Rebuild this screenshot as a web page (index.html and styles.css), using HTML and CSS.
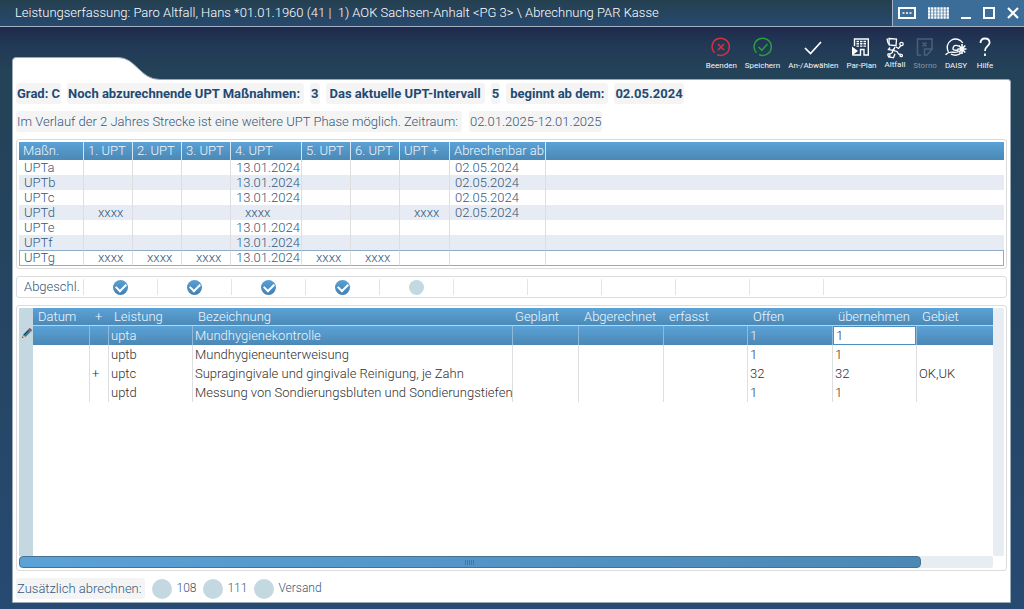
FILE: index.html
```html
<!DOCTYPE html>
<html lang="de">
<head>
<meta charset="utf-8">
<title>Abrechnung PAR Kasse</title>
<link rel="stylesheet" href="styles.css">
</head>
<body>
<header class="titlebar">
  <h1 class="title">Leistungserfassung: Paro Altfall, Hans *01.01.1960 (41 |&nbsp; 1) AOK Sachsen-Anhalt &lt;PG 3&gt; \ Abrechnung PAR Kasse</h1>
  <div class="window-controls">
    <button type="button" aria-label="Kennwort"><svg width="18" height="12" viewBox="0 0 18 12"><rect x="1" y="1" width="16" height="10" fill="none" stroke="#fff" stroke-width="2"/><path d="M4.500 6h2M8 6h2M11.500 6h2" stroke="#fff" stroke-width="1.500"/></svg></button>
    <button type="button" aria-label="Tastatur"><svg width="21" height="12" viewBox="0 0 21 12"><path d="M0 1.500h21M0 4.500h21M0 7.500h21M0 10.500h21" stroke="#fff" stroke-width="2.400" stroke-dasharray="2.300 .8"/></svg></button>
    <button type="button" aria-label="Minimieren"><svg width="10" height="12" viewBox="0 0 10 12"><path d="M0 11h10" stroke="#fff" stroke-width="2"/></svg></button>
    <button type="button" aria-label="Maximieren"><svg width="12" height="12" viewBox="0 0 12 12"><rect x="1" y="1" width="10" height="10" fill="none" stroke="#fff" stroke-width="2"/></svg></button>
    <button type="button" aria-label="Schließen"><svg width="12" height="12" viewBox="0 0 12 12"><path d="M1 1l10 10M11 1L1 11" stroke="#fff" stroke-width="2.200"/></svg></button>
  </div>
</header>

<main class="workspace">
  <div class="top">
    <svg class="tab" width="148" height="23" viewBox="0 0 148 23"><path d="M.5 23V4Q.5.500 4 .5H106C124 .5 128 22.500 147 22.500V23Z" fill="#fff"/><path d="M.5 23V4Q.5.500 4 .5H106C124 .5 128 22.500 148 22.500" fill="none" stroke="#9aa9b8"/></svg>
    <nav class="toolbar">
      <button type="button"><svg width="20" height="20" viewBox="0 0 20 20" fill="none" stroke="#d9313a" stroke-width="1.500"><path d="M3.500 15.800A8.600 8.600 0 1 1 6 17.600M7 7l6 6M13 7l-6 6"/></svg>Beenden</button>
      <button type="button"><svg width="20" height="20" viewBox="0 0 20 20" fill="none" stroke="#28a03c" stroke-width="1.500"><path d="M3.500 15.800A8.600 8.600 0 1 1 6 17.600M5.500 10l3.300 3.300L14.500 7"/></svg>Speichern</button>
      <button type="button"><svg width="20" height="20" viewBox="0 0 20 20" fill="none" stroke="#fff" stroke-width="1.700"><path d="M2 11l5.500 5.500L18 5"/></svg>An-/Abwählen</button>
      <button type="button"><svg width="20" height="20" viewBox="0 0 20 20" fill="none" stroke="#fff" stroke-width="1.400"><path d="M3.500 9V2H17.300V18H13V12.500H9.500V18H1.500"/><path d="M5.500 4.500h10M5.500 6.800h10M5.500 9.100h10" stroke-dasharray="2.500 1"/><path d="M1 9.500l6 4.500-6 4.500z" fill="#fff" stroke="none"/></svg>Par-Plan</button>
      <button type="button" class="raised"><svg width="20" height="22" viewBox="0 0 20 22" fill="none" stroke="#fff" stroke-width="1.300"><path d="M4 1.500L11.500 2.200 11 8.700 4.200 8Z"/><path d="M2 1.500l1 4.500 1.500 1.500M5 10.500l-1.500 2 4 .8 2.500-3M7.500 13v2.500L5 17l-2.500 0M2.500 17.500l1.500 3M11 10l2.500 1.500 2.500-3M10 10l-1.500 3.500 3.500 1 1.500 2.500 2.500.5M5 18l-.5 2 4 .8 1.500-4"/><circle cx="16.500" cy="7" r="1.700"/><circle cx="16.200" cy="18.500" r="1.200"/></svg>Altfall</button>
      <button type="button" disabled><svg width="20" height="20" viewBox="0 0 20 20" fill="none" stroke="#4b6075" stroke-width="1.500"><path d="M6 18H2.500V2H17V12.500L12 18H9.500V12H17M7.500 5.500l4 4M11.500 5.500l-4 4"/></svg>Storno</button>
      <button type="button"><svg width="22" height="20" viewBox="0 0 22 20" fill="none" stroke="#fff" stroke-width="1.400"><path d="M17.800 6A8.200 8.200 0 1 0 3.500 14.800M6 17.200Q12 20 16.500 15.500"/><path d="M.5 17.800Q3.500 14.500 8 15.200T14 13.500M13.800 9.200Q9.500 7 8.200 10.500T13 13"/><path d="M17 7v10M12.500 12h9M13.800 8.500l6.400 7M20.200 8.500l-6.400 7" stroke-width="1.600"/></svg>DAISY</button>
      <button type="button"><svg width="20" height="20" viewBox="0 0 20 20" fill="none" stroke="#fff" stroke-width="1.800"><path d="M5.500 6Q5.500 1.500 10 1.500T14.600 5.800C14.600 9 10 9 10 14M10 16.500V19"/></svg>Hilfe</button>
    </nav>
  </div>

  <section class="panel">
    <div class="chips strong">
      <span class="chip">Grad: C</span><span class="chip wide">Noch abzurechnende UPT Maßnahmen:</span><span class="chip">3</span><span class="chip inset">Das aktuelle UPT-Intervall</span><span class="chip">5</span><span class="chip inset">beginnt ab dem:</span><span class="chip">02.05.2024</span>
    </div>
    <div class="chips">
      <span class="chip wide">Im Verlauf der 2 Jahres Strecke ist eine weitere UPT Phase möglich. Zeitraum:</span><span class="chip">02.01.2025-12.01.2025</span>
    </div>

    <div class="frame">
      <table class="measures">
        <colgroup><col class="w65"><col class="w49"><col class="w49"><col class="w49"><col class="w71"><col class="w49"><col class="w49"><col class="w50"><col class="w96"><col></colgroup>
        <thead><tr><th>Maßn.</th><th>1. UPT</th><th>2. UPT</th><th>3. UPT</th><th>4. UPT</th><th>5. UPT</th><th>6. UPT</th><th>UPT +</th><th>Abrechenbar ab</th><th></th></tr></thead>
        <tbody>
          <tr><td>UPTa</td><td></td><td></td><td></td><td>13.01.2024</td><td></td><td></td><td></td><td>02.05.2024</td><td></td></tr>
          <tr><td>UPTb</td><td></td><td></td><td></td><td>13.01.2024</td><td></td><td></td><td></td><td>02.05.2024</td><td></td></tr>
          <tr><td>UPTc</td><td></td><td></td><td></td><td>13.01.2024</td><td></td><td></td><td></td><td>02.05.2024</td><td></td></tr>
          <tr><td>UPTd</td><td class="x">xxxx</td><td></td><td></td><td class="x">xxxx</td><td></td><td></td><td class="x">xxxx</td><td>02.05.2024</td><td></td></tr>
          <tr><td>UPTe</td><td></td><td></td><td></td><td>13.01.2024</td><td></td><td></td><td></td><td></td><td></td></tr>
          <tr><td>UPTf</td><td></td><td></td><td></td><td>13.01.2024</td><td></td><td></td><td></td><td></td><td></td></tr>
          <tr class="current"><td>UPTg</td><td class="x">xxxx</td><td class="x">xxxx</td><td class="x">xxxx</td><td>13.01.2024</td><td class="x">xxxx</td><td class="x">xxxx</td><td></td><td></td><td></td></tr>
        </tbody>
      </table>
    </div>

    <div class="frame done">
      <span class="done-label">Abgeschl.</span>
      <span class="done-cell"><input type="checkbox" class="dot" aria-label="Abgeschlossen 1" checked></span>
      <span class="done-cell"><input type="checkbox" class="dot" aria-label="Abgeschlossen 2" checked></span>
      <span class="done-cell"><input type="checkbox" class="dot" aria-label="Abgeschlossen 3" checked></span>
      <span class="done-cell"><input type="checkbox" class="dot" aria-label="Abgeschlossen 4" checked></span>
      <span class="done-cell"><input type="checkbox" class="dot" aria-label="Abgeschlossen 5"></span>
      <span class="done-cell"></span><span class="done-cell"></span><span class="done-cell"></span><span class="done-cell"></span><span class="done-cell"></span>
    </div>

    <div class="frame services">
      <div class="gutter"><svg width="12" height="12" viewBox="0 0 12 12"><path d="M1 11l1-3.500L4.500 10z" fill="#d8b98c"/><path d="M2 7.500L7 2.500 9.500 5l-5 5z" fill="#2f7f9c"/><path d="M2.800 8.300l5-5" stroke="#123a50"/><path d="M7 2.500L8.800.8l2.500 2.500L9.500 5z" fill="#8a5a58"/><path d="M1 11l.4-1.400 1 1z" fill="#222"/></svg></div>
      <div class="grid">
        <table class="positions">
          <colgroup><col class="w57"><col class="w19"><col class="w84"><col class="w320"><col class="w66"><col class="w85"><col class="w84"><col class="w85"><col class="w84"><col></colgroup>
          <thead><tr><th>Datum</th><th>+</th><th>Leistung</th><th>Bezeichnung</th><th class="near">Geplant</th><th>Abgerechnet</th><th>erfasst</th><th>Offen</th><th>übernehmen</th><th>Gebiet</th></tr></thead>
          <tbody>
            <tr class="selected"><td></td><td></td><td>upta</td><td>Mundhygienekontrolle</td><td></td><td></td><td></td><td>1</td><td class="edit"><input type="text" value="1" aria-label="übernehmen"></td><td></td></tr>
            <tr><td></td><td></td><td>uptb</td><td>Mundhygieneunterweisung</td><td></td><td></td><td></td><td>1</td><td>1</td><td></td></tr>
            <tr><td></td><td>+</td><td>uptc</td><td>Supragingivale und gingivale Reinigung, je Zahn</td><td></td><td></td><td></td><td>32</td><td>32</td><td>OK,UK</td></tr>
            <tr><td></td><td></td><td>uptd</td><td>Messung von Sondierungsbluten und Sondierungstiefen</td><td></td><td></td><td></td><td>1</td><td>1</td><td></td></tr>
          </tbody>
        </table>
      </div>
      <div class="vscroll"></div>
      <div class="hscroll"><div class="thumb"></div></div>
    </div>

    <footer class="extras">
      <span class="chip wide">Zusätzlich abrechnen:</span>
      <label><input type="checkbox" class="dot big">108</label>
      <label><input type="checkbox" class="dot big">111</label>
      <label><input type="checkbox" class="dot big">Versand</label>
    </footer>
  </section>
</main>
</body>
</html>
```
FILE: styles.css
```css
* { box-sizing: border-box; }

body {
  margin: 0;
  min-height: 100vh;
  display: flex;
  flex-direction: column;
  font: 300 13px/15px Roboto, "Liberation Sans", sans-serif;
  color: #34587a;
  background: #244258;
}

button, input { font: inherit; color: inherit; margin: 0; }

button {
  padding: 0;
  border: 0;
  background: none;
}

.titlebar {
  display: flex;
  justify-content: space-between;
  height: 27px;
  border-bottom: 1px solid #a3b1c0;
  background: linear-gradient(#25404f, #27496f);
}

.title {
  margin: 0;
  padding-left: 15px;
  font: 300 13px/26px Roboto, "Liberation Sans", sans-serif;
  color: #fff;
}

.window-controls {
  display: flex;
  align-items: center;
  gap: 12px;
  padding: 0 5px;
  border-left: 1px solid #a3b1c0;
  background: #3c6d98;
}

.window-controls svg { display: block; }

.workspace {
  flex: 1;
  display: flex;
  flex-direction: column;
  padding: 0 13px 6px 12px;
  background: linear-gradient(#1f2a4c, #223a57 20px, #244258 45px, #244258 90px, #264a72);
}

.top {
  display: flex;
  justify-content: space-between;
  align-items: flex-end;
  height: 53px;
}

.tab { display: block; position: relative; }

.toolbar {
  display: flex;
  gap: 8px;
  align-self: flex-start;
  padding: 10px 16px 0 0;
}

.toolbar button {
  display: flex;
  flex-direction: column;
  align-items: center;
  gap: 3px;
  font-size: 8px;
  font-weight: 400;
  line-height: 11px;
  color: #f4f7fa;
}

.toolbar button:disabled { color: #8795a3; }
.toolbar .raised { gap: 0; }

.panel {
  flex: 1;
  display: flex;
  flex-direction: column;
  gap: 7px;
  margin-top: -1px;
  padding: 3px;
  border: 1px solid #9aa9b8;
  border-radius: 0 3px 0 0;
  background: #fff;
}

.chips { display: flex; gap: 7px; }

.strong { gap: 6px; font-weight: 700; color: #1f4a73; }

.chip {
  padding: 3px 1px;
  border-radius: 3px;
  background: #f4f4f4;
}

.wide { padding-right: 4px; }
.inset { padding-left: 4px; padding-right: 4px; }

.frame {
  padding: 2px;
  border: 1px solid #dcdcdc;
  border-radius: 3px;
}

table {
  width: 100%;
  table-layout: fixed;
  border-collapse: separate;
  border-spacing: 0;
}

.w19 { width: 19px; }
.w49 { width: 49px; }
.w50 { width: 50px; }
.w57 { width: 57px; }
.w65 { width: 65px; }
.w66 { width: 66px; }
.w71 { width: 71px; }
.w84 { width: 84px; }
.w85 { width: 85px; }
.w96 { width: 96px; }
.w320 { width: 320px; }

th, td {
  padding: 0;
  text-align: left;
  white-space: nowrap;
  border-right: 1px solid #dedede;
}

th:last-child, td:last-child { border-right: 0; }

th { font-weight: 300; color: #f0f6fb; }

thead tr, .selected { background: linear-gradient(#5ba2d7, #4b88b5); }

.measures th { height: 18px; padding: 0 0 1px 4px; border-color: #d4e4f1; }
.measures td { height: 15px; padding-left: 5px; line-height: 15px; }
.measures tbody tr:nth-child(even) { background: #e7ecf4; }
.measures .x { padding-left: 14px; }
.measures .current td { height: 16px; line-height: 14px; border-top: 1px solid #8fadc6; border-bottom: 1px solid #8fadc6; }
.measures .current td:first-child { border-left: 1px solid #8fadc6; padding-left: 4px; }
.measures .current td:last-child { border-right: 1px solid #8fadc6; }

.done {
  display: flex;
  height: 22px;
}

.done-label { width: 65px; padding-left: 5px; border-right: 1px solid #e4e4e4; }

.done-cell {
  display: flex;
  justify-content: center;
  align-items: center;
  width: 74px;
  border-right: 1px solid #e4e4e4;
}

.dot {
  appearance: none;
  width: 15px;
  height: 15px;
  border-radius: 50%;
  background: #c3d8e1;
}

.dot:checked {
  display: grid;
  place-items: center;
  background: linear-gradient(#5a9fd3, #4180b3);
}

.dot:checked::before {
  content: "";
  width: 8px;
  height: 5px;
  margin-bottom: 2px;
  border: solid #fff;
  border-width: 0 0 2px 2px;
  rotate: -45deg;
}

.services {
  flex: 1;
  display: grid;
  grid-template-columns: 14px 1fr 11px;
  grid-template-rows: 1fr 12px;
}

.gutter { padding: 19px 0 0 2px; background: #c3d8e1; }
.gutter svg { display: block; }

.positions { color: #303030; }
.positions th { height: 18px; padding-left: 5px; border-right: 0; border-bottom: 1px solid #b9d5ea; }
.positions .near { padding-left: 2px; }
.positions td { height: 19px; padding-left: 2px; }
.positions .selected td { color: #f0f6fb; border-color: #8fbadb; }
.positions .edit { padding: 0; }

.edit input {
  display: block;
  width: 100%;
  height: 19px;
  padding: 0 2px;
  border: 1px solid #4a8cc0;
  border-radius: 0;
  color: #303030;
  background: #fff;
}

.vscroll { border-radius: 2px; background: #e8edf3; }
.hscroll { grid-column: 1 / 3; border-radius: 2px; background: #e8edf1; }

.thumb {
  width: 92.6%;
  height: 12px;
  border: 1px solid #47728f;
  border-radius: 4px;
  background:
    repeating-linear-gradient(90deg, #3f78a5 0 1px, transparent 1px 2px) center / 10px 5px no-repeat,
    linear-gradient(90deg, #5ba2d7, #4b88b5);
}

.extras {
  display: flex;
  align-items: center;
  gap: 7px;
}

.extras label {
  display: flex;
  align-items: center;
  gap: 4px;
  font-size: 12px;
}

.big { width: 20px; height: 20px; }
```
